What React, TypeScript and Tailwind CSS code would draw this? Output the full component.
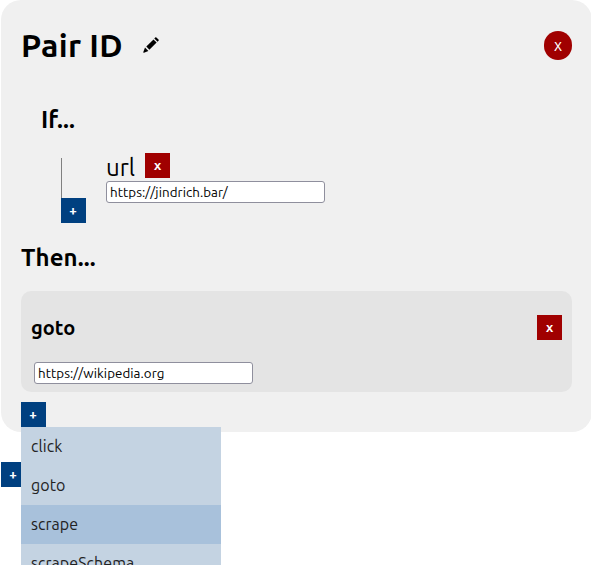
import React from "react";

function AddButton() {
  return (
    <button className="flex h-[25px] w-[25px] shrink-0 items-center justify-center bg-[#004080] pr-px text-[13.333px] leading-none font-bold text-white">
      +
    </button>
  );
}

function RemoveButton() {
  return (
    <button className="flex h-[25px] w-[25px] shrink-0 items-center justify-center bg-[#a00000] text-[13.333px] leading-none font-bold text-white">
      x
    </button>
  );
}

function Field({ value }: { value: string }) {
  return (
    <input
      readOnly
      value={value}
      className="block h-[22px] w-[219px] rounded-[3px] border border-[#8f8f9d] bg-white px-[3px] pt-px text-[13.333px] tracking-[0.07px] text-black outline-none"
    />
  );
}

const actions = [
  { name: "click", style: "bg-[#c4d3e2]" },
  { name: "goto", style: "bg-[#c4d3e2]" },
  { name: "scrape", style: "bg-[#a8c1db]" },
  { name: "scrapeSchema", style: "bg-[#c4d3e2]" },
];

export default function App() {
  return (
    <div className="h-[565px] w-full overflow-hidden bg-white pl-px font-['Ubuntu','Noto_Sans',sans-serif] text-black">
      <section className="h-[432px] w-[591px] rounded-[20px] bg-[#f0f0f0] pr-5 pl-5">
        <header className="flex h-[90px] items-center">
          <h1 className="w-[122px] text-[32px] leading-none font-bold tracking-[0.3px] whitespace-nowrap">Pair ID</h1>
          <svg width="16" height="16" viewBox="0 0 16 16" fill="black">
            <path d="M11.3 1.4 12.2.5q.6-.6 1.2 0l2.1 2.1q.6.6 0 1.2l-.9.9z" />
            <path d="M10.5 2.4 13.6 5.5 6.4 12.7 3.3 9.6z" />
            <path d="M2 10.6 5.4 14 1 15.7q-.9.2-.7-.7z" />
          </svg>
          <button className="ml-auto flex h-[29px] w-7 items-center justify-center rounded-full bg-[#a00000] pb-px text-[16px] leading-none text-white">
            x
          </button>
        </header>
        <h2 className="ml-5 flex h-[58px] items-center pt-0.5 text-[24px] leading-none font-bold tracking-[0.1px]">If...</h2>
        <div className="ml-10 flex h-[84px] pt-[5px]">
          <div className="flex h-[70px] w-[45px] flex-col pt-[5px]">
            <div className="h-10 w-px bg-[#808080]" />
            <AddButton />
          </div>
          <div>
            <div className="flex h-7 items-start">
              <span className="w-[39px] text-[24px] leading-[30px]">url</span>
              <RemoveButton />
            </div>
            <Field value="https://jindrich.bar/" />
          </div>
        </div>
        <h2 className="flex h-[50px] items-center pt-0.5 text-[24px] leading-none font-bold tracking-[0.1px]">Then...</h2>
        <div className="mt-[9px] h-[101px] w-[551px] rounded-[10px] bg-[#e4e4e4] px-[10px] pt-6">
          <div className="flex h-[47px] items-start">
            <h3 className="text-[20px] leading-[25px] font-bold">goto</h3>
            <div className="ml-auto"><RemoveButton /></div>
          </div>
          <div className="ml-[3px]">
            <Field value="https://wikipedia.org" />
          </div>
        </div>
        <div className="relative mt-[10px] w-[25px]">
          <AddButton />
          <ul className="absolute top-[25px] left-0 z-10 w-[200px] text-[#222]">
            {actions.map((a) => (
              <li key={a.name} className={`flex h-[39px] items-center px-[10px] pb-0.5 text-[16px] leading-none tracking-[0.05px] ${a.style}`}>
                {a.name}
              </li>
            ))}
          </ul>
        </div>
      </section>
      <div className="mt-[30px]"><AddButton /></div>
    </div>
  );
}
